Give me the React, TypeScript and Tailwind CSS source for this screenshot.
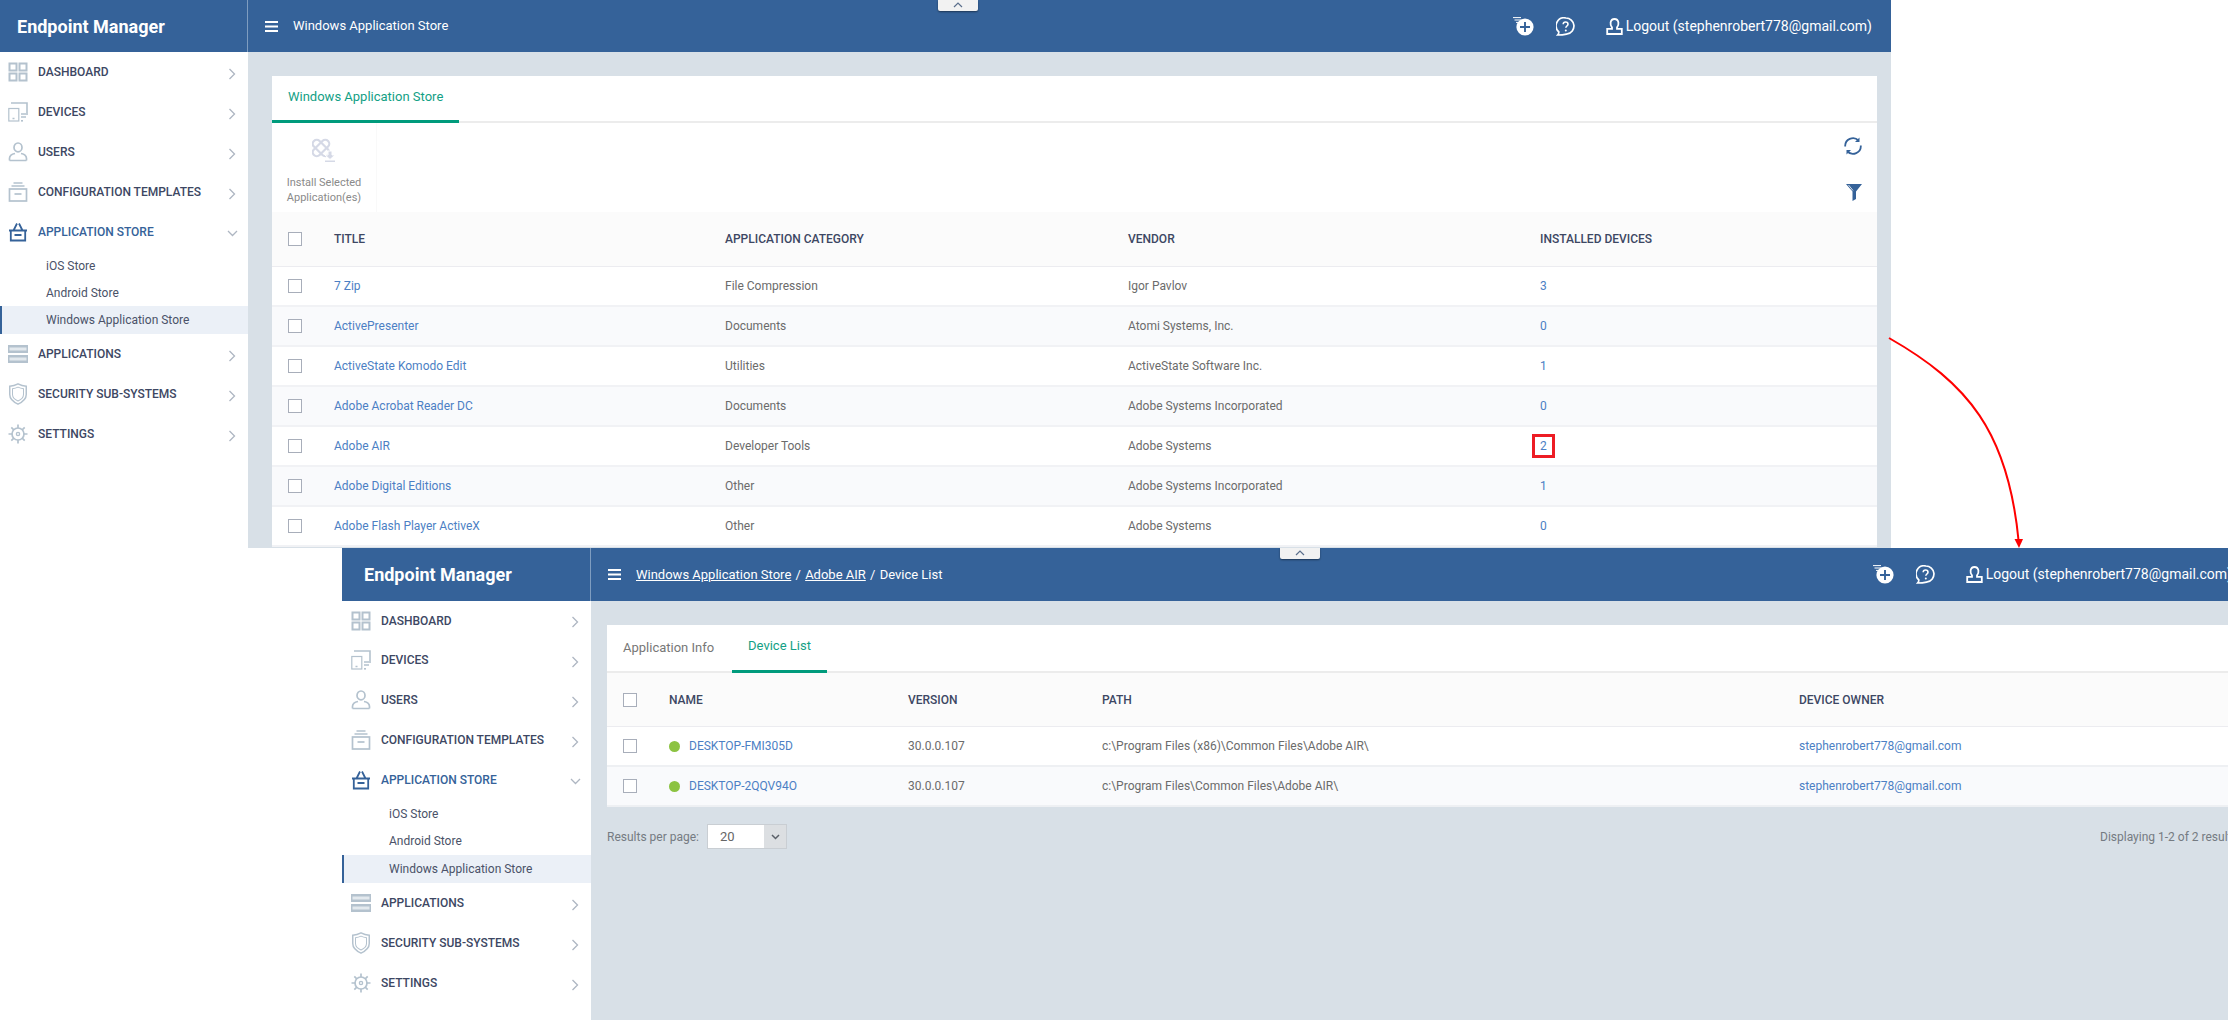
import React from "react";

const IconDashboard = () => (
  <svg width="20" height="20" viewBox="0 0 20 20" fill="none" stroke="#b4c2ce" strokeWidth="2">
    <rect x="1.5" y="1.5" width="7" height="7" /><rect x="11.5" y="1.500" width="7" height="7" />
    <rect x="1.5" y="11.5" width="7" height="7" /><rect x="11.5" y="11.5" width="7" height="7" />
  </svg>
);
const IconDevices = () => (
  <svg width="20" height="20" viewBox="0 0 20 20" fill="none" stroke="#b4c2ce" strokeWidth="1.2">
    <path d="M3 1h16v12" strokeWidth="1.6" />
    <rect x="0.8" y="6.5" width="10" height="12.5" />
    <path d="M4.5 16.5h2M13 12h5M13 15h5" strokeWidth="1.4" />
    <rect x="13" y="18" width="2" height="1.6" fill="#b4c2ce" stroke="none" />
  </svg>
);
const IconUser = () => (
  <svg width="20" height="20" viewBox="0 0 20 20" fill="none" stroke="#b4c2ce" strokeWidth="1.7">
    <ellipse cx="10" cy="5.4" rx="4" ry="4.4" />
    <path d="M1.5 18.5v-2c0-3 3-4.5 5.5-5M18.5 18.5v-2c0-3-3-4.5-5.5-5M1.5 18.5h17" />
  </svg>
);
const IconConfig = () => (
  <svg width="20" height="20" viewBox="0 0 20 20" fill="none" stroke="#b4c2ce" strokeWidth="1.7">
    <path d="M5.5 1h9M3.5 4h13" />
    <rect x="1.5" y="7" width="17" height="12" />
    <path d="M6.5 12h7" />
  </svg>
);
const IconBasket = () => (
  <svg width="20" height="20" viewBox="0 0 20 20" fill="none" stroke="#356299" strokeWidth="1.8">
    <path d="M1 8.5h18M2.8 8.5v10h14.4v-10M6.5 13h7M5.5 8.5L9 1.5M14.5 8.5L11 1.5" />
  </svg>
);
const IconApps = () => (
  <svg width="20" height="20" viewBox="0 0 20 20" fill="none">
    <rect x="0" y="1" width="20" height="18" fill="#b4c2ce" />
    <rect x="1.5" y="3.5" width="17" height="3" fill="#e3e9ee" />
    <rect x="1.5" y="13.5" width="17" height="3" fill="#e3e9ee" />
    <rect x="0" y="9" width="20" height="2" fill="#ffffff" />
  </svg>
);
const IconShield = () => (
  <svg width="20" height="22" viewBox="0 0 20 24" fill="none" stroke="#b4c2ce" strokeWidth="1.6">
    <path d="M10 1c3 1.6 6 2.4 9 2.6v9c0 5-4.5 8.4-9 10.4-4.5-2-9-5.4-9-10.4v-9C4 3.4 7 2.6 10 1z" />
    <path d="M10 4.5c2 1 4 1.5 6 1.7v6.3c0 3.5-3 5.8-6 7.2-3-1.4-6-3.7-6-7.2V6.2c2-.2 4-.7 6-1.7z" strokeWidth="1.1" />
  </svg>
);
const IconGear = () => (
  <svg width="20" height="20" viewBox="0 0 20 20" fill="none" stroke="#b4c2ce" strokeWidth="1.7">
    <circle cx="10" cy="10" r="6" />
    <circle cx="10" cy="10" r="1.6" strokeWidth="1.4" />
    <path d="M10 0.5V4M10 16v3.5M0.5 10H4M16 10h3.5M3.3 3.3l2.5 2.5M14.2 14.2l2.5 2.5M16.7 3.3l-2.5 2.5M5.8 14.2l-2.5 2.5" />
  </svg>
);
const ChevronRight = () => (
  <svg width="8" height="12" viewBox="0 0 8 12" fill="none" stroke="#aeb6c2" strokeWidth="1.3" className="mt-[3px]">
    <path d="M1.5 1l5 5-5 5" />
  </svg>
);
const ChevronDown = () => (
  <svg width="11" height="7" viewBox="0 0 11 7" fill="none" stroke="#aeb6c2" strokeWidth="1.3" className="mt-[2px]">
    <path d="M1 1l4.5 4.5L10 1" />
  </svg>
);
const Hamburger = () => (
  <svg width="13" height="11" viewBox="0 0 13 11" fill="#ffffff">
    <rect width="13" height="2" /><rect y="4.5" width="13" height="2" /><rect y="9" width="13" height="2" />
  </svg>
);
const IconAddTask = () => (
  <svg width="21" height="19" viewBox="0 0 21 19">
    <path d="M0 0.6h8M1.5 3h7M3 5.4h4" stroke="#ffffff" strokeWidth="1" />
    <circle cx="12" cy="10" r="8.6" fill="#ffffff" />
    <path d="M12 5v10M7 10h10" stroke="#356299" strokeWidth="1.9" />
  </svg>
);
const IconHelp = () => (
  <svg width="19" height="19" viewBox="0 0 19 19" fill="none">
    <path d="M9.8 1a8 8 0 0 1 1.4 15.9c-1.8.4-4 1.1-9.6 1.1 1-1 1.3-2 1.2-3.2A8 8 0 0 1 9.8 1z" stroke="#ffffff" strokeWidth="1.7" />
    <path d="M7.2 7.2c0-3 4.8-3 4.8 0 0 1.8-2.2 1.8-2.2 3.6" stroke="#ffffff" strokeWidth="1.6" />
    <circle cx="9.8" cy="13.4" r="1" fill="#ffffff" />
  </svg>
);
const IconLogoutUser = () => (
  <svg width="17" height="17" viewBox="0 0 17 17" fill="none" stroke="#ffffff" strokeWidth="1.8">
    <path d="M6 9.5C4.5 8 4.3 6.6 4.6 4.5 5 2.2 6.5 1 8.5 1s3.5 1.2 3.9 3.5c.3 2.1.1 3.5-1.4 5v1.3h4.800V16H1.200v-5.200H6z" />
  </svg>
);
const IconRefresh = () => (
  <svg width="18" height="18" viewBox="0 0 18 18" fill="none" stroke="#356299" strokeWidth="1.8">
    <path d="M1.200 9.500A7.800 7.800 0 0 1 14.500 3.500" />
    <path d="M16.800 8.500A7.800 7.800 0 0 1 3.500 14.500" />
    <path d="M15.500 0.500v4.500h-4.500z" fill="#356299" stroke="none" />
    <path d="M2.500 17.500v-4.500h4.500z" fill="#356299" stroke="none" />
  </svg>
);
const IconFilter = () => (
  <svg width="16" height="17" viewBox="0 0 16 17">
    <path d="M0 0h16L10 7.500v7.500l-3.500 2V7.500z" fill="#356299" />
    <path d="M2.500 1l4.500 5.500" stroke="#ffffff" strokeWidth="0.8" />
  </svg>
);
const IconInstall = () => (
  <svg width="24" height="24" viewBox="0 0 24 24" fill="none" stroke="#d5d9e6" strokeWidth="2.200">
    <rect x="-1" y="6" width="20" height="8" rx="4" transform="rotate(45 9 10)" />
    <rect x="-1" y="6" width="20" height="8" rx="4" transform="rotate(-45 9 10)" />
    <path d="M16 13h4v4h3l-5 4.500-5-4.500h3z" fill="#d5d9e6" stroke="#ffffff" strokeWidth="1" />
    <rect x="13" y="22.500" width="10" height="1.500" fill="#d5d9e6" stroke="none" />
  </svg>
);

const menu = [
  { label: "DASHBOARD", icon: <IconDashboard /> },
  { label: "DEVICES", icon: <IconDevices /> },
  { label: "USERS", icon: <IconUser /> },
  { label: "CONFIGURATION TEMPLATES", icon: <IconConfig /> },
];
const menuAfter = [
  { label: "APPLICATIONS", icon: <IconApps /> },
  { label: "SECURITY SUB-SYSTEMS", icon: <IconShield /> },
  { label: "SETTINGS", icon: <IconGear /> },
];

function MenuItem({ label, icon, rowClass }: { label: string; icon: React.ReactNode; rowClass: string }) {
  return (
    <div className={`flex items-center pr-[12px] ${rowClass}`}>
      <span className="flex w-[20px] justify-center">{icon}</span>
      <span className="ml-[10px] flex-1 text-[12px] font-medium text-[#3d4763]">{label}</span>
      <ChevronRight />
    </div>
  );
}

function Sidebar({ second }: { second: boolean }) {
  const pad = second ? "pl-[9px]" : "pl-2";
  const sub = second ? "pl-[47px]" : "pl-[46px]";
  return (
    <aside className={`${second ? "w-[249px]" : "w-[248px]"} shrink-0 bg-white`}>
      {menu.map((m, i) => (
        <MenuItem key={m.label} {...m} rowClass={`${second && i === 0 ? "h-[39px]" : "h-[40px]"} ${pad}`} />
      ))}
      <div className={`flex h-[40px] items-center pr-[10px] ${pad}`}>
        <span className="flex w-[20px] justify-center"><IconBasket /></span>
        <span className="ml-[10px] flex-1 text-[12px] font-medium text-[#356299]">APPLICATION STORE</span>
        <ChevronDown />
      </div>
      <div className={`flex h-[27px] items-center text-[12px] text-[#4a5268] ${sub}`}>iOS Store</div>
      <div className={`flex items-center text-[12px] text-[#4a5268] ${second ? "h-[28px]" : "h-[27px]"} ${sub}`}>Android Store</div>
      <div className={`flex h-[28px] items-center border-l-2 border-[#356299] bg-[#ebf0f7] text-[12px] text-[#4a5268] ${second ? "pl-[45px]" : "pl-[44px]"}`}>Windows Application Store</div>
      {menuAfter.map((m) => <MenuItem key={m.label} {...m} rowClass={`h-[40px] ${pad}`} />)}
    </aside>
  );
}

function TopBar({ second, children }: { second: boolean; children: React.ReactNode }) {
  return (
    <header className={`relative flex shrink-0 bg-[#356299] text-white ${second ? "h-[53px]" : "h-[52px]"}`}>
      <div className={`flex shrink-0 items-center border-r border-[#7f9dc0] text-[18px] font-bold ${second ? "w-[249px] pl-[22px]" : "w-[248px] pl-[17px]"}`}>Endpoint Manager</div>
      <div className="flex flex-1 items-center pl-[17px] pr-[19px]">
        <Hamburger />
        <div className="ml-[15px] flex-1 text-[13px]">{children}</div>
        <IconAddTask />
        <span className="ml-[22px]"><IconHelp /></span>
        <span className="ml-[31px]"><IconLogoutUser /></span>
        <span className="ml-[3px] whitespace-nowrap text-[14px]">Logout (stephenrobert778@gmail.com)</span>
      </div>
      <div className="absolute left-[938px] top-0 flex h-[11px] w-[40px] items-start justify-center rounded-b-[2px] bg-[#f2f2f2] shadow-[0_1px_2px_rgba(0,0,0,0.45)]">
        <svg width="10" height="6" viewBox="0 0 10 6" fill="none" stroke="#5b6f8c" strokeWidth="1.200" className="mt-[2px]"><path d="M1 5l4-4 4 4" /></svg>
      </div>
    </header>
  );
}

const Checkbox = () => <span className="block h-[14px] w-[14px] border border-[#a8aeba] bg-white" />;

const apps = [
  ["7 Zip", "File Compression", "Igor Pavlov", "3"],
  ["ActivePresenter", "Documents", "Atomi Systems, Inc.", "0"],
  ["ActiveState Komodo Edit", "Utilities", "ActiveState Software Inc.", "1"],
  ["Adobe Acrobat Reader DC", "Documents", "Adobe Systems Incorporated", "0"],
  ["Adobe AIR", "Developer Tools", "Adobe Systems", "2"],
  ["Adobe Digital Editions", "Other", "Adobe Systems Incorporated", "1"],
  ["Adobe Flash Player ActiveX", "Other", "Adobe Systems", "0"],
];

const th = "text-[12px] font-medium text-[#3d4763]";
const link = "text-[12px] text-[#4c7fc4]";
const td = "text-[12px] text-[#6b6b6b]";

function WindowOne() {
  return (
    <section className="absolute left-0 top-0 flex h-[548px] w-[1891px] flex-col overflow-hidden">
      <TopBar second={false}>Windows Application Store</TopBar>
      <div className="flex min-h-0 flex-1">
        <Sidebar second={false} />
        <main className="flex-1 bg-[#d8e0e7] pl-6 pr-[14px] pt-6">
          <div className="bg-white">
            <div className="flex h-[47px] border-b-2 border-[#ececec]">
              <div className="flex h-[47px] w-[187px] items-center border-b-[3px] border-[#009b7c] pl-4 pb-[3px] text-[13px] text-[#13a085]">Windows Application Store</div>
            </div>
            <div className="flex h-[89px]">
              <div className="flex w-[105px] flex-col items-center border-r border-[#f9f9f9] pt-[15px]">
                <IconInstall />
                <div className="mt-[13px] text-center text-[11px] leading-[15px] text-[#8a8a8a]">Install Selected<br />Application(es)</div>
              </div>
              <div className="flex flex-1 flex-col items-end pr-[15px] pt-[14px]">
                <IconRefresh />
                <span className="mt-[29px]"><IconFilter /></span>
              </div>
            </div>
            <div className="flex h-[55px] items-center border-b border-[#ececf0] bg-[#fbfbfb]">
              <div className="w-[62px] pl-4"><Checkbox /></div>
              <div className={`w-[391px] ${th}`}>TITLE</div>
              <div className={`w-[403px] ${th}`}>APPLICATION CATEGORY</div>
              <div className={`w-[412px] ${th}`}>VENDOR</div>
              <div className={th}>INSTALLED DEVICES</div>
            </div>
            {apps.map((r, i) => (
              <div key={r[0]} className={`flex h-[40px] items-center border-b-2 border-[#f1f2f5] ${i % 2 ? "bg-[#f9fafc]" : "bg-white"}`}>
                <div className="w-[62px] pl-4"><Checkbox /></div>
                <div className={`w-[391px] ${link}`}>{r[0]}</div>
                <div className={`w-[403px] ${td}`}>{r[1]}</div>
                <div className={`w-[412px] ${td}`}>{r[2]}</div>
                <div className={`relative ${link}`}>
                  {r[3]}
                  {r[0] === "Adobe AIR" && <span className="absolute -left-[8px] -top-[3px] h-[24px] w-[23px] border-[3px] border-[#ed1c24]" />}
                </div>
              </div>
            ))}
          </div>
        </main>
      </div>
    </section>
  );
}

const devices = [
  ["DESKTOP-FMI305D", "30.0.0.107", "c:\\Program Files (x86)\\Common Files\\Adobe AIR\\"],
  ["DESKTOP-2QQV94O", "30.0.0.107", "c:\\Program Files\\Common Files\\Adobe AIR\\"],
];

function WindowTwo() {
  return (
    <section className="absolute left-[342px] top-[548px] flex h-[472px] w-[1909px] flex-col overflow-hidden">
      <TopBar second={true}>
        <span className="underline">Windows Application Store</span> <span className="mx-[1px]">/</span> <span className="underline">Adobe AIR</span> <span className="mx-[1px]">/</span> Device List
      </TopBar>
      <div className="flex min-h-0 flex-1">
        <Sidebar second={true} />
        <main className="min-w-0 flex-1 bg-[#d8e0e7] pl-4 pr-[14px] pt-6">
          <div className="bg-white">
            <div className="flex h-[48px] border-b-2 border-[#ececec]">
              <div className="flex h-[48px] w-[125px] items-center pl-4 pb-[3px] text-[13px] text-[#777777]">Application Info</div>
              <div className="flex h-[48px] w-[95px] items-center justify-center border-b-[3px] border-[#009b7c] pb-[3px] text-[13px] text-[#13a085]">Device List</div>
            </div>
            <div className="flex h-[54px] items-center border-b border-[#ececf0] bg-[#fbfbfb]">
              <div className="w-[62px] pl-4"><Checkbox /></div>
              <div className={`w-[239px] ${th}`}>NAME</div>
              <div className={`w-[194px] ${th}`}>VERSION</div>
              <div className={`w-[697px] ${th}`}>PATH</div>
              <div className={th}>DEVICE OWNER</div>
            </div>
            {devices.map((r, i) => (
              <div key={r[0]} className={`flex h-[40px] items-center border-b-2 border-[#eef0f3] ${i % 2 ? "bg-[#f9fafc]" : "bg-white"}`}>
                <div className="w-[62px] pl-4"><Checkbox /></div>
                <div className="flex w-[239px] items-center">
                  <span className="h-[11px] w-[11px] rounded-full bg-[#8cc342]" />
                  <span className={`ml-[9px] ${link}`}>{r[0]}</span>
                </div>
                <div className={`w-[194px] ${td}`}>{r[1]}</div>
                <div className={`w-[697px] ${td}`}>{r[2]}</div>
                <div className={link}>stephenrobert778@gmail.com</div>
              </div>
            ))}
          </div>
          <div className="mt-[17px] flex items-center">
            <span className="shrink-0 whitespace-nowrap text-[12px] text-[#757b82]">Results per page:</span>
            <div className="ml-[8px] flex h-[25px] w-[80px] shrink-0 items-stretch border border-[#c9ced3] bg-white">
              <span className="flex flex-1 items-center pl-[12px] text-[13px] text-[#666666]">20</span>
              <span className="flex w-[22px] items-center justify-center bg-[#dcdfe2]">
                <svg width="9" height="6" viewBox="0 0 9 6" fill="none" stroke="#5a6068" strokeWidth="1.500"><path d="M1 1l3.500 3.500L8 1" /></svg>
              </span>
            </div>
            <span className="ml-[1313px] shrink-0 whitespace-nowrap text-[12px] text-[#757b82]">Displaying 1-2 of 2 results</span>
          </div>
        </main>
      </div>
    </section>
  );
}

export default function App() {
  return (
    <div className="relative h-[1020px] w-[2228px] overflow-hidden bg-white [font-family:Roboto,sans-serif]">
      <WindowOne />
      <WindowTwo />
      <svg className="pointer-events-none absolute left-0 top-0" width="2228" height="1020" fill="none">
        <path d="M1889 338C1968 383 2008 432 2018.500 540" stroke="#ff0000" strokeWidth="2" />
        <polygon points="2019,548 2014.500,539 2023,539" fill="#ff0000" />
      </svg>
    </div>
  );
}
